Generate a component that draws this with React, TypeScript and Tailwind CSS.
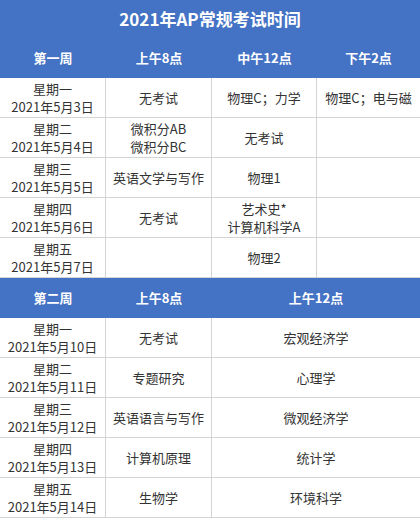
import React from "react"

type Row = { day: string; date: string; cells: string[][] }

const week1: Row[] = [
  { day: "星期一", date: "2021年5月3日", cells: [["无考试"], ["物理C；力学"], ["物理C；电与磁"]] },
  { day: "星期二", date: "2021年5月4日", cells: [["微积分AB", "微积分BC"], ["无考试"], []] },
  { day: "星期三", date: "2021年5月5日", cells: [["英语文学与写作"], ["物理1"], []] },
  { day: "星期四", date: "2021年5月6日", cells: [["无考试"], ["艺术史*", "计算机科学A"], []] },
  { day: "星期五", date: "2021年5月7日", cells: [[], ["物理2"], []] },
]

const week2: Row[] = [
  { day: "星期一", date: "2021年5月10日", cells: [["无考试"], ["宏观经济学"]] },
  { day: "星期二", date: "2021年5月11日", cells: [["专题研究"], ["心理学"]] },
  { day: "星期三", date: "2021年5月12日", cells: [["英语语言与写作"], ["微观经济学"]] },
  { day: "星期四", date: "2021年5月13日", cells: [["计算机原理"], ["统计学"]] },
  { day: "星期五", date: "2021年5月14日", cells: [["生物学"], ["环境科学"]] },
]

const Cell = ({ lines, span, last }: { lines: string[]; span?: boolean; last?: boolean }) => (
  <div
    className={`h-[40px] flex flex-col items-center justify-center border-b border-[#d4d4d4] text-[13px] leading-[18px] text-[#333] ${
      span ? "col-span-2" : ""
    } ${last ? "" : "border-r"}`}
  >
    {lines.map((l) => (
      <span key={l}>{l}</span>
    ))}
  </div>
)

const Header = ({ labels, spanLast }: { labels: string[]; spanLast?: boolean }) => (
  <div className="grid grid-cols-[106px_106px_105px_1fr] h-[40px] bg-[#4472c4] text-white font-bold text-[13px]">
    {labels.map((l, i) => (
      <div
        key={l}
        className={`flex items-center justify-center ${spanLast && i === labels.length - 1 ? "col-span-2" : ""}`}
      >
        {l}
      </div>
    ))}
  </div>
)

export default function App() {
  return (
    <div
      className="w-[420px] h-[520px] bg-white"
      style={{ fontFamily: '"Noto Sans CJK SC", "Noto Sans", sans-serif' }}
    >
      <div className="h-[38px] bg-[#4472c4] flex items-center justify-center text-white font-bold text-[17px]">
        2021年AP常规考试时间
      </div>
      <Header labels={["第一周", "上午8点", "中午12点", "下午2点"]} />
      <div className="grid grid-cols-[106px_106px_105px_1fr]">
        {week1.map((r) => (
          <React.Fragment key={r.date}>
            <Cell lines={[r.day, r.date]} />
            {r.cells.map((c, i) => (
              <Cell key={i} lines={c} last={i === r.cells.length - 1} />
            ))}
          </React.Fragment>
        ))}
      </div>
      <Header labels={["第二周", "上午8点", "上午12点"]} spanLast />
      <div className="grid grid-cols-[106px_106px_105px_1fr]">
        {week2.map((r) => (
          <React.Fragment key={r.date}>
            <Cell lines={[r.day, r.date]} />
            <Cell lines={r.cells[0]} />
            <Cell lines={r.cells[1]} span last />
          </React.Fragment>
        ))}
      </div>
    </div>
  )
}
